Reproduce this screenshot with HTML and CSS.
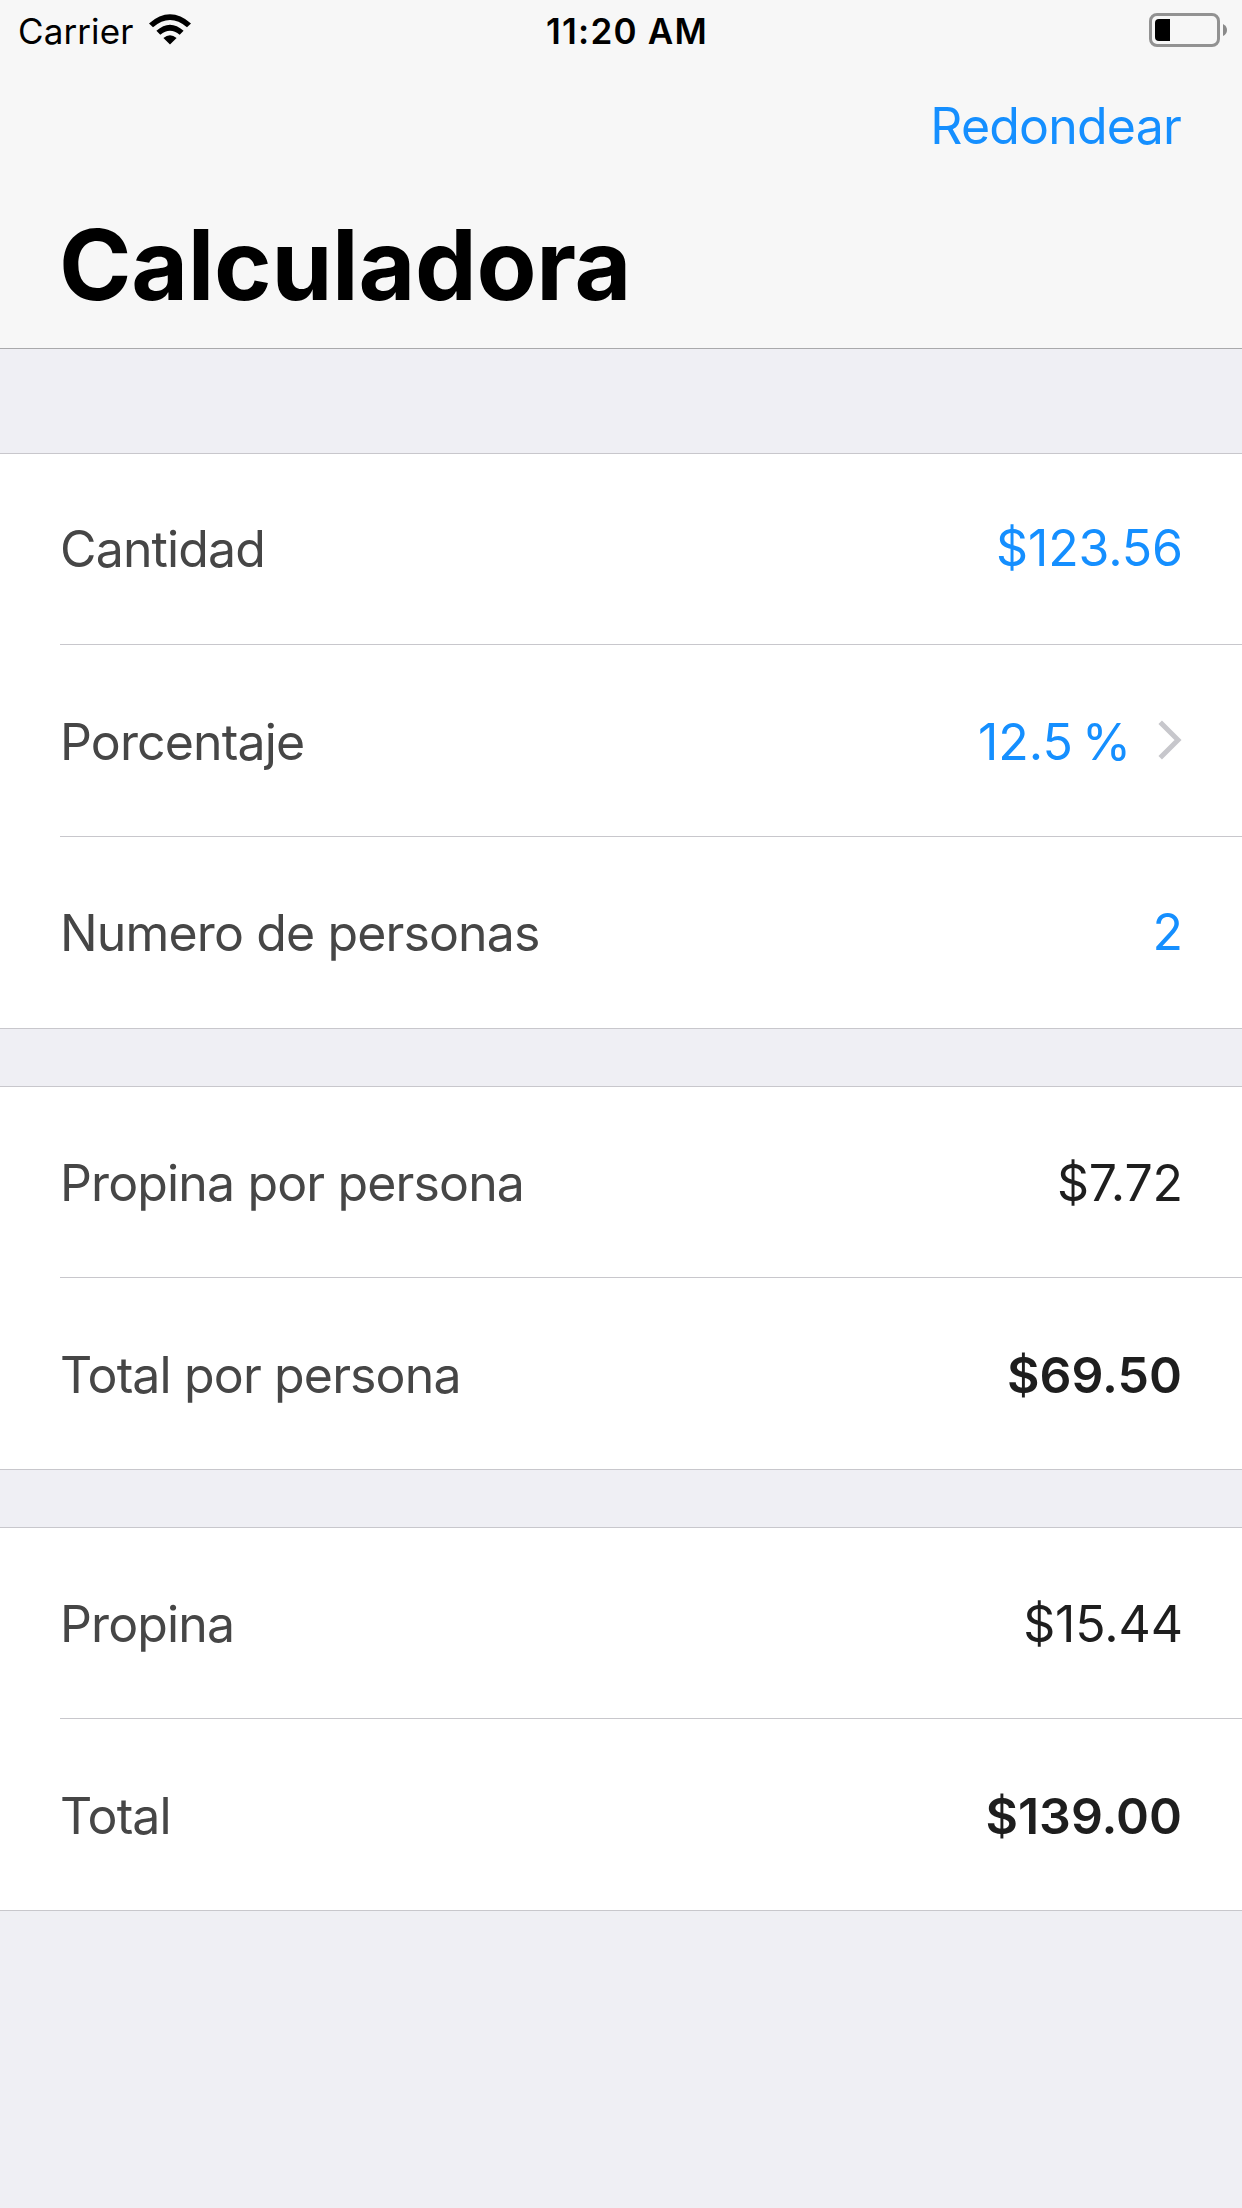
FILE: index.html
```html
<!DOCTYPE html>
<html lang="es">
<head>
<meta charset="utf-8">
<title>Calculadora</title>
<link rel="stylesheet" href="styles.css">
</head>
<body>
<header class="header">
  <div class="status">
    <div class="carrier"><span>Carrier</span>
      <svg class="wifi" width="42" height="31" viewBox="0 0 42 31"><path d="M21 30.5l-6.6-6.6q6.6-5.2 13.2 0zM7.4 16.8q13.6-12 27.2 0l-3.9 3.9q-9.7-8-19.4 0zM0 9.4q21-18.200 42 0l-4 3.900q-17-14.600-34 0z"/></svg>
    </div>
    <time class="clock">11:20 AM</time>
    <svg class="battery" width="79" height="34" viewBox="0 0 79 34"><rect x="1.500" y="1.500" width="68" height="31" rx="6.500" fill="none" stroke="#929292" stroke-width="3"/><path d="M21 6v22H10q-4 0-4-4V10q0-4 4-4z"/><path d="M74 11q4 2 4 6t-4 6z" fill="#8a8a8a"/></svg>
  </div>
  <div class="toolbar"><span class="action">Redondear</span></div>
  <h1 class="title">Calculadora</h1>
</header>
<main class="form">
  <section class="group">
    <div class="row"><span class="label">Cantidad</span><span class="value blue editable">$123.56</span></div>
    <div class="row"><span class="label lowered">Porcentaje</span><span class="value blue percent">12.5 %</span>
      <svg class="chevron" width="24" height="40" viewBox="0 0 24 40"><path d="M2.200 2.200L20 20 2.200 37.800" fill="none" stroke="#c7c7cc" stroke-width="5"/></svg></div>
    <div class="row"><span class="label">Numero de personas</span><span class="value blue editable">2</span></div>
  </section>
  <section class="group results">
    <div class="row"><span class="label">Propina por persona</span><span class="value">$7.72</span></div>
    <div class="row"><span class="label">Total por persona</span><span class="value bold">$69.50</span></div>
  </section>
  <section class="group results">
    <div class="row"><span class="label">Propina</span><span class="value">$15.44</span></div>
    <div class="row"><span class="label">Total</span><span class="value bold">$139.00</span></div>
  </section>
</main>
</body>
</html>
```

FILE: styles.css
```css
* { box-sizing: border-box; }
body { margin: 0; min-height: 2208px; background: #efeff4; font-family: Inter, sans-serif; color: #1e1e1e; }
.header { height: 349px; background: #f7f7f7; border-bottom: 1px solid #a9a9ab; }
.status { height: 60px; display: grid; grid-template-columns: 1fr auto 1fr; align-items: center; padding: 0 14px 0 18px; font-size: 34px; color: #000; }
.carrier { display: flex; align-items: center; gap: 16px; font-size: 35px; letter-spacing: 0.1px; padding-top: 2px; }
.clock { font-size: 35px; font-weight: 600; letter-spacing: 1.2px; padding: 1px 0 0 8px; }
.wifi { margin-bottom: 3px; }
.battery { justify-self: end; }
.toolbar { height: 132px; display: flex; justify-content: flex-end; align-items: center; padding-right: 61px; color: #158fff; font-size: 50px; letter-spacing: -0.8px; }
.title { margin: 0; height: 146px; padding: 0 59px; line-height: 146px; font-size: 98px; color: #000; font-weight: 700; letter-spacing: -0.3px; }
.form { padding-top: 104px; display: flex; flex-direction: column; gap: 57px; }
.group { background: #fff; border-top: 1px solid #c8c7cc; border-bottom: 1px solid #c8c7cc; }
.row { height: 190px; margin-left: 60px; padding-right: 59px; display: flex; align-items: center; justify-content: space-between; font-size: 50px; }
.row + .row { height: 192px; border-top: 1px solid #c8c7cc; }
.label { color: #464646; letter-spacing: -0.86px; }
.value { margin-left: auto; white-space: nowrap; letter-spacing: -0.1px; }
.editable { padding-bottom: 2px; }
.lowered, .results .label, .results .value { padding-top: 2px; }
.blue { color: #158fff; }
.bold { font-weight: 600; letter-spacing: 0; padding-right: 1px; }
.percent { word-spacing: -5px; letter-spacing: 0; padding-top: 2px; }
.chevron { margin: 0 1px 2px 27px; }
```
